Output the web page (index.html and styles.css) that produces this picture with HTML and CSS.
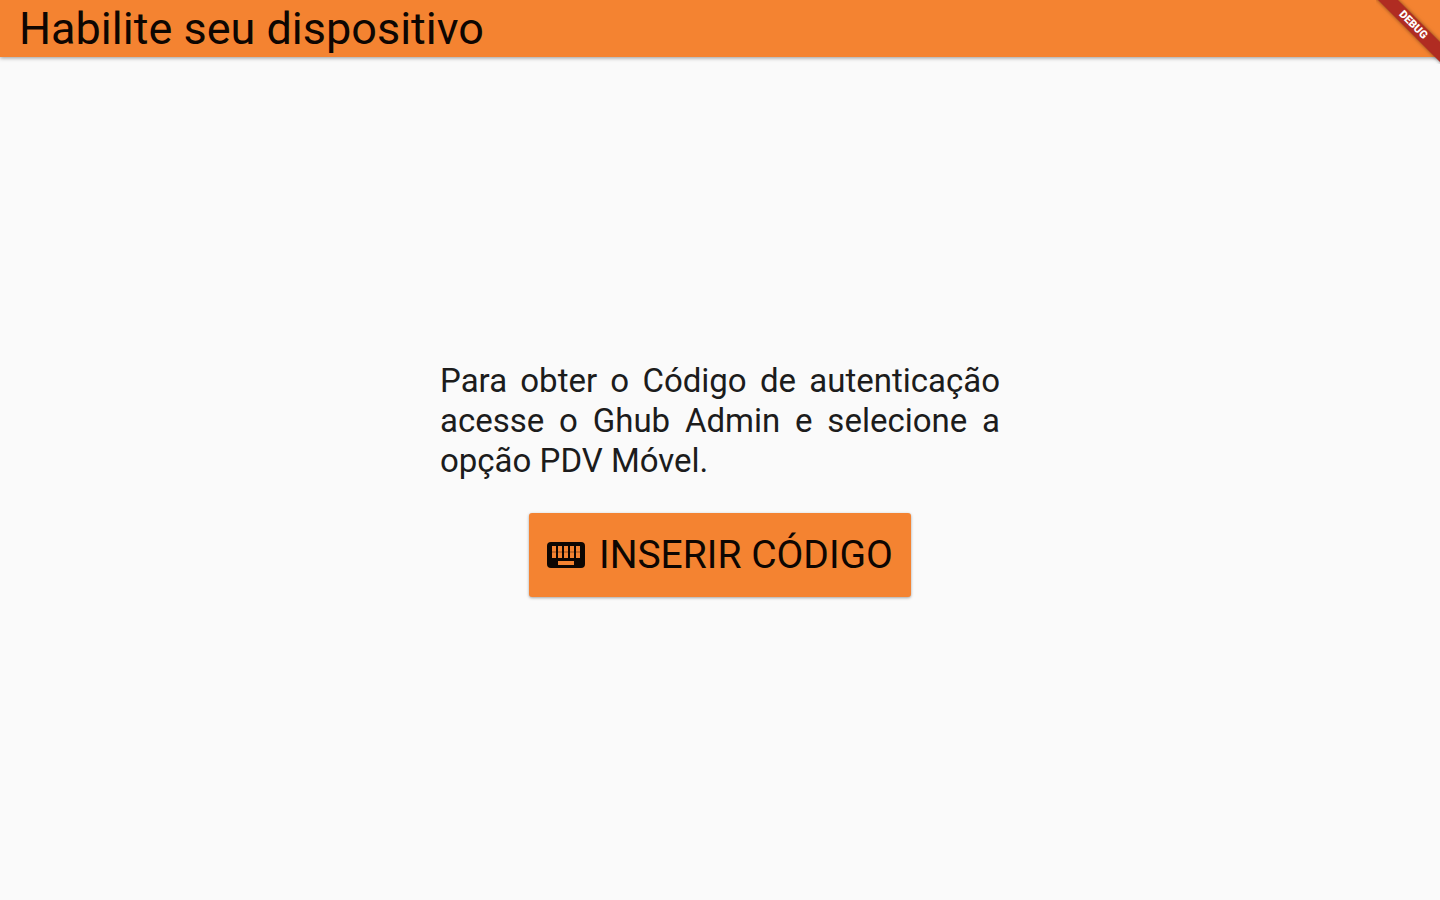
FILE: index.html
```html
<!DOCTYPE html>
<html lang="pt-BR">
<head>
    <meta charset="UTF-8">
    <meta name="viewport" content="width=device-width, initial-scale=1.0">
    <title>Habilite seu dispositivo</title>
    <link rel="stylesheet" href="styles.css">
</head>
<body>
    <header class="app-bar">
        <h1 class="app-title">Habilite seu dispositivo</h1>
    </header>
    <main class="content">
        <p class="instructions">Para obter o Código de autenticação acesse o Ghub Admin e selecione a opção PDV Móvel.</p>
        <button type="button" class="code-button">
            <svg class="keyboard-icon" viewBox="0 0 38 26" aria-hidden="true">
                <rect width="38" height="26" rx="4" fill="currentColor"/>
                <path fill="#f48331" d="M5 4h4v12H5zM11 4h4v12h-4zM17 4h4v12h-4zM23 4h4v12h-4zM29 4h4v12h-4zM11 19h16v4H11z"/>
                <path fill="currentColor" fill-opacity="0.2" d="M5 9h28v2H5z"/>
            </svg>
            <span>INSERIR CÓDIGO</span>
        </button>
    </main>
    <div class="debug-corner">
        <div class="debug-banner">DEBUG</div>
    </div>
</body>
</html>
```

FILE: styles.css
```css
body {
    margin: 0;
    min-height: 100vh;
    display: flex;
    flex-direction: column;
    background-color: #fafafa;
    color: #1c1c1c;
    font-family: Roboto, sans-serif;
}

.app-bar {
    padding: 0 19px;
    background-color: #f48331;
    box-shadow: 0 1px 4px rgba(0, 0, 0, 0.4);
}

.app-title {
    margin: 0;
    color: #0d0602;
    font-size: 45px;
    font-weight: 400;
    line-height: 57px;
}

.content {
    flex: 1;
    display: flex;
    flex-direction: column;
    align-items: center;
    justify-content: center;
    gap: 32px;
}

.instructions {
    width: 560px;
    max-width: 90%;
    margin: 0;
    font-size: 33px;
    font-weight: 400;
    line-height: 40px;
    text-align: justify;
}

.code-button {
    display: flex;
    align-items: center;
    gap: 14px;
    height: 84px;
    padding: 0 18px;
    border: 0;
    border-radius: 3px;
    background-color: #f48331;
    color: #0d0602;
    box-shadow: 0 1px 3px rgba(0, 0, 0, 0.35);
    font-family: inherit;
    font-size: 39px;
    font-weight: 400;
    cursor: pointer;
}

.keyboard-icon {
    width: 38px;
    height: 26px;
}

/* Clips the ribbon to the corner of the window */
.debug-corner {
    position: absolute;
    top: 0;
    right: 0;
    width: 64px;
    height: 64px;
    overflow: hidden;
    pointer-events: none;
}

.debug-banner {
    position: absolute;
    top: 18px;
    right: -38px;
    width: 130px;
    background-color: #b02c22;
    color: white;
    box-shadow: 0 0 4px rgba(0, 0, 0, 0.5);
    font-size: 11px;
    font-weight: 900;
    line-height: 14px;
    text-align: center;
    transform: rotate(45deg);
}
```
